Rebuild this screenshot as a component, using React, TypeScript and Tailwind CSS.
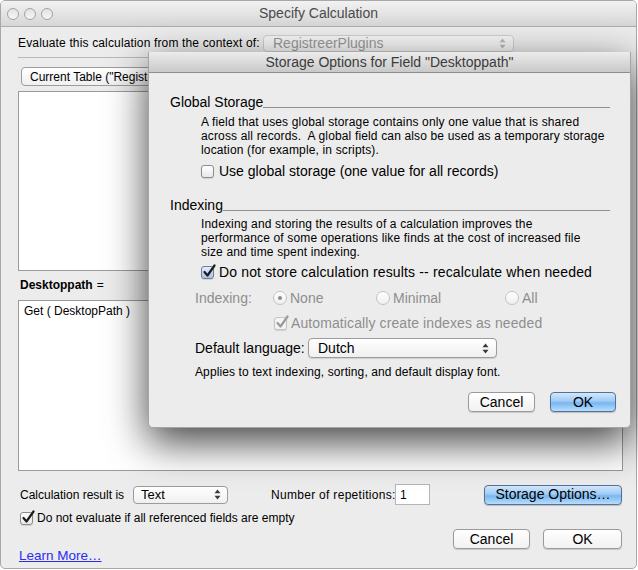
import React from 'react';

const font = "font-['Liberation_Sans',Arial,sans-serif]";

function Arrows({ color = '#3a3a3a' }: { color?: string }) {
  return (
    <svg width="7" height="11" viewBox="0 0 7 11">
      <path d="M3.5 0.5 L6.5 4.2 H0.5 Z M3.5 10.5 L6.5 6.8 H0.5 Z" fill={color} />
    </svg>
  );
}

function CheckBox({ checked, disabled, blue }: { checked?: boolean; disabled?: boolean; blue?: boolean }) {
  const box = disabled
    ? 'border-[#c4c4c4] bg-[#f4f4f4]'
    : blue
      ? 'border-[#6b7f99] bg-gradient-to-b from-[#e4eefb] to-[#a9c3e6]'
      : 'border-[#8c8c8c] bg-gradient-to-b from-white to-[#e8e8e8]';
  return (
    <span className={`relative inline-block w-[13px] h-[13px] rounded-[3px] border shrink-0 shadow-[0_1px_1px_rgba(0,0,0,0.12)] ${box}`}>
      {checked && (
        <svg className="absolute left-[0px] top-[-3px]" width="15" height="15" viewBox="0 0 15 15">
          <path d="M2.5 8 L5.5 11.5 L12.5 1.5" fill="none" stroke={disabled ? '#9a9a9a' : '#1d1d1d'} strokeWidth="2.2" strokeLinecap="round" strokeLinejoin="round" />
        </svg>
      )}
    </span>
  );
}

function Radio({ on }: { on?: boolean }) {
  return (
    <span className="relative inline-flex items-center justify-center w-[14px] h-[14px] rounded-full border border-[#c2c2c2] bg-gradient-to-b from-white to-[#efefef] shrink-0">
      {on && <span className="w-[4px] h-[4px] rounded-full bg-[#8c8c8c]" />}
    </span>
  );
}

function GrayButton({ label, className = '' }: { label: string; className?: string }) {
  return (
    <div className={`h-[20px] flex items-center justify-center rounded-[4px] border border-[#9a9a9a] bg-gradient-to-b from-white to-[#f1f1f1] shadow-[0_1px_1px_rgba(0,0,0,0.15)] text-[14px] text-black ${className}`}>
      {label}
    </div>
  );
}

function BlueButton({ label, className = '' }: { label: string; className?: string }) {
  return (
    <div className={`h-[20px] flex items-center justify-center rounded-[4px] border border-[#52729e] bg-[linear-gradient(#d4e7fa,#9ecbf6_45%,#79b6f1_55%,#b9ddfb)] shadow-[0_1px_1px_rgba(0,0,0,0.2)] text-[14px] text-black ${className}`}>
      {label}
    </div>
  );
}

function Traffic() {
  return <span className="w-[12px] h-[12px] rounded-full border border-[#a3a3a3] bg-gradient-to-b from-[#e2e2e2] to-[#f6f6f6]" />;
}

export default function App() {
  return (
    <div className={`relative w-[638px] h-[570px] bg-white overflow-hidden ${font}`}>
      {/* main window */}
      <div className="w-[637px] h-[569px] border border-[#a8a8a8] rounded-[5px] bg-[#ececec] flex flex-col overflow-hidden">
        <div className="h-[26px] shrink-0 relative flex items-center justify-center border-b border-[#adadad] bg-gradient-to-b from-[#f2f2f2] to-[#d6d6d6]">
          <div className="absolute left-[6px] top-[7px] flex gap-[5px]">
            <Traffic />
            <Traffic />
            <Traffic />
          </div>
          <span className="text-[14px] text-[#4a4a4a]">Specify Calculation</span>
        </div>

        <div className="flex-1 flex flex-col pl-[17px] pr-[14px]">
          <div className="mt-[7px] flex items-center h-[18px] text-[12px] tracking-[0.15px] text-black">
            <span className="w-[245px] whitespace-nowrap">Evaluate this calculation from the context of:</span>
            <div className="w-[251px] h-[17px] flex items-center justify-between pl-[9px] pr-[7px] rounded-[4px] border border-[#cdcdcd] bg-[#f5f5f5] text-[14px] tracking-normal text-[#9a9a9a]">
              <span>RegistreerPlugins</span>
              <Arrows color="#b8b8b8" />
            </div>
          </div>

          <div className="mt-[5px] border-t border-[#b9b9b9] w-[603px]" />

          <div className="mt-[9px] ml-[3px] w-[200px] h-[19px] flex items-center px-[8px] rounded-[4px] border border-[#9c9c9c] bg-gradient-to-b from-white to-[#f0f0f0] text-[12px] text-black whitespace-nowrap">
            Current Table ("RegistreerPlugins")
          </div>

          <div className="mt-[5px] flex gap-[10px] h-[180px]">
            <div className="w-[300px] border border-[#9a9a9a] bg-white" />
            <div className="flex-1 border border-[#9a9a9a] bg-white" />
          </div>

          <div className="mt-[7px] h-[14px] flex items-center ml-[2px] text-[12px] text-black">
            <span className="font-bold">Desktoppath</span>
            <span className="ml-[4px]">=</span>
          </div>

          <div className="mt-[8px] w-[605px] h-[171px] border border-[#9a9a9a] bg-white px-[5px] pt-[1px] text-[12px] text-black">
            Get ( DesktopPath )
          </div>

          <div className="mt-[13px] flex items-center h-[21px] text-[12px] text-black">
            <span className="ml-[2px] w-[113px]">Calculation result is</span>
            <div className="w-[95px] h-[18px] flex items-center justify-between pl-[7px] pr-[6px] rounded-[4px] border border-[#9c9c9c] bg-gradient-to-b from-white to-[#f0f0f0] text-[13px]">
              <span>Text</span>
              <Arrows />
            </div>
            <span className="ml-[43px] w-[124px] tracking-[0.3px] whitespace-nowrap">Number of repetitions:</span>
            <div className="w-[35px] h-[21px] border border-[#b5b5b5] bg-white px-[4px] flex items-center">1</div>
            <BlueButton label="Storage Options…" className="ml-auto w-[138px]" />
          </div>

          <div className="mt-[6px] flex items-center gap-[4px] ml-[2px] h-[14px] text-[12px] text-black">
            <CheckBox checked />
            <span>Do not evaluate if all referenced fields are empty</span>
          </div>

          <div className="mt-[4px] flex items-start">
            <span className="mt-[17px] ml-[1px] text-[13.5px] text-[#2b2bf0] underline">Learn More…</span>
            <div className="ml-auto flex gap-[13px]">
              <GrayButton label="Cancel" className="w-[77px]" />
              <GrayButton label="OK" className="w-[79px]" />
            </div>
          </div>
        </div>
      </div>

      {/* sheet */}
      <div className="absolute left-[148px] top-[52px] w-[483px] h-[376px] rounded-b-[5px] bg-[#ececec] border border-t-0 border-[#a5a5a5] shadow-[0_14px_40px_rgba(0,0,0,0.75)] flex flex-col">
        <div className="h-[21px] shrink-0 flex items-center justify-center border-b border-[#8e8e8e] bg-gradient-to-b from-[#ececec] to-[#c9c9c9] text-[14px] text-[#3b3b3b]">
          Storage Options for Field "Desktoppath"
        </div>

        <div className="flex flex-col pl-[21px] pr-[20px] text-black">
          <div className="mt-[21px] flex items-end h-[16px]">
            <span className="text-[14px] leading-[16px]">Global Storage</span>
            <div className="flex-1 border-b border-[#8f8f8f] mb-[2px]" />
          </div>
          <div className="mt-[5px] ml-[31px] text-[12px] leading-[14px] tracking-[0.15px]">
            A field that uses global storage contains only one value that is shared<br />
            across all records.&nbsp; A global field can also be used as a temporary storage<br />
            location (for example, in scripts).
          </div>
          <div className="mt-[6px] ml-[31px] flex items-center gap-[5px] h-[16px] text-[14px]">
            <CheckBox />
            <span>Use global storage (one value for all records)</span>
          </div>

          <div className="mt-[18px] flex items-end h-[16px]">
            <span className="text-[14px] leading-[16px]">Indexing</span>
            <div className="flex-1 border-b border-[#8f8f8f] mb-[2px]" />
          </div>
          <div className="mt-[4px] ml-[31px] text-[12px] leading-[14px] tracking-[0.15px]">
            Indexing and storing the results of a calculation improves the<br />
            performance of some operations like finds at the cost of increased file<br />
            size and time spent indexing.
          </div>
          <div className="mt-[5px] ml-[31px] flex items-center gap-[5px] h-[16px] text-[14px] tracking-[0.15px]">
            <CheckBox checked blue />
            <span>Do not store calculation results -- recalculate when needed</span>
          </div>

          <div className="mt-[10px] ml-[25px] flex items-center h-[16px] text-[14px] text-[#8e8e8e]">
            <span className="w-[78px]">Indexing:</span>
            <div className="w-[103px] flex items-center gap-[3px]"><Radio on /><span>None</span></div>
            <div className="w-[129px] flex items-center gap-[3px]"><Radio /><span>Minimal</span></div>
            <div className="flex items-center gap-[3px]"><Radio /><span>All</span></div>
          </div>

          <div className="mt-[9px] ml-[104px] flex items-center gap-[4px] h-[16px] text-[14px] tracking-[0.1px] text-[#8e8e8e]">
            <CheckBox checked disabled />
            <span>Automatically create indexes as needed</span>
          </div>

          <div className="mt-[7px] ml-[25px] flex items-center h-[20px] text-[14px]">
            <span className="w-[113px] whitespace-nowrap">Default language:</span>
            <div className="w-[189px] h-[20px] flex items-center justify-between pl-[9px] pr-[7px] rounded-[4px] border border-[#9c9c9c] bg-gradient-to-b from-white to-[#f0f0f0] shadow-[0_1px_1px_rgba(0,0,0,0.12)]">
              <span>Dutch</span>
              <Arrows />
            </div>
          </div>

          <div className="mt-[7px] ml-[25px] text-[12px] leading-[14px] tracking-[0.1px]">
            Applies to text indexing, sorting, and default display font.
          </div>

          <div className="mt-[13px] flex justify-end gap-[15px] -mr-[6px]">
            <GrayButton label="Cancel" className="w-[67px]" />
            <BlueButton label="OK" className="w-[66px]" />
          </div>
        </div>
      </div>
    </div>
  );
}
